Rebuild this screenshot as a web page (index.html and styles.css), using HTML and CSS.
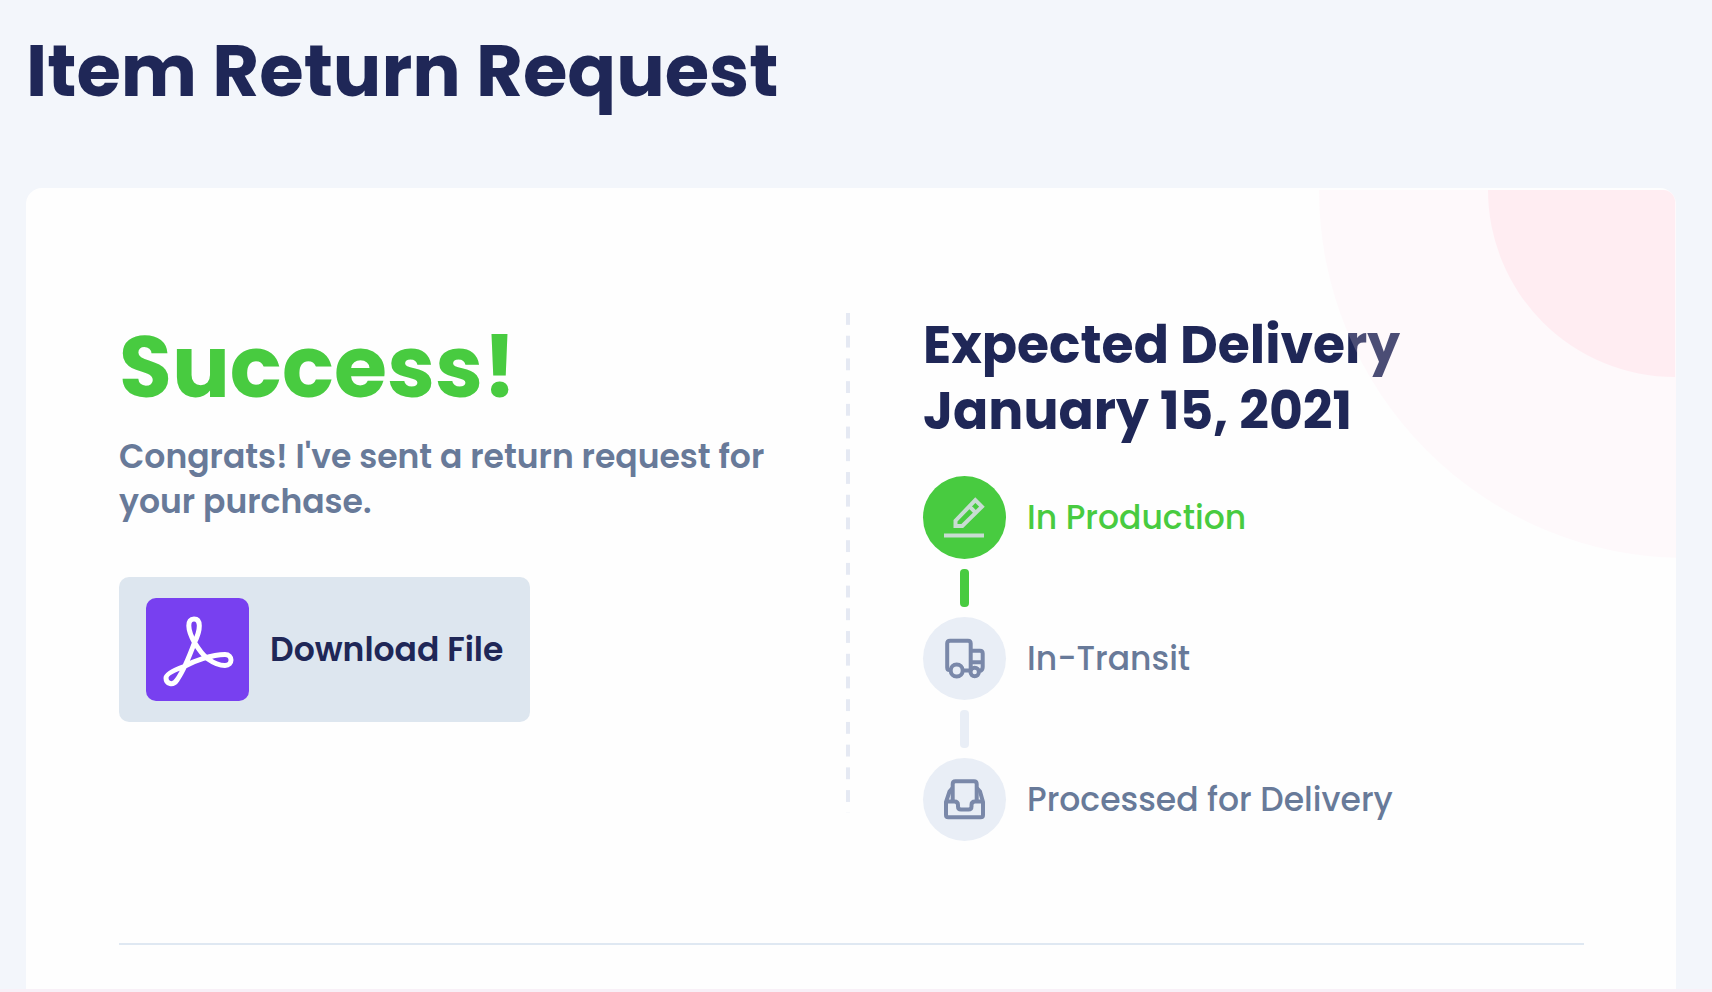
FILE: index.html
```html
<!DOCTYPE html>
<html lang="en">
<head>
<meta charset="utf-8">
<meta name="viewport" content="width=device-width, initial-scale=1">
<title>Item Return Request</title>
<link rel="stylesheet" href="styles.css">
</head>
<body>
<main class="page">
  <h1 class="page-title">Item Return Request</h1>
  <div class="card">
    <div class="columns">
      <section class="result">
        <h2 class="result-title">Success!</h2>
        <p class="result-text">Congrats! I've sent a return request for your purchase.</p>
        <button class="download" type="button">
          <svg class="download-icon" viewBox="0 0 103 103" aria-hidden="true">
            <path d="M48 21C41 21 41 31 48.5 44.5C53 52 58 58 62 61C69 66 74 67.5 79 67.5C87 67.5 87 56.500 79 56.500C66 56.500 48 63 38 68.500C28 72 20 76 20 80C20 86 27 88 31 82C38 72 45 54 48.500 44.500C55 31 55 21 48 21Z"/>
          </svg>
          <span>Download File</span>
        </button>
      </section>
      <div class="divider"></div>
      <section class="delivery">
        <h2 class="delivery-title">Expected Delivery<br>January 15, 2021</h2>
        <ol class="steps">
          <li class="step step-active">
            <svg class="step-icon" viewBox="0 0 83 83" aria-hidden="true">
              <path d="M32.500 50V44.700L52.300 24.200L58.900 30.700L39.300 50Z M46.500 30.500L52.600 36.600"/>
              <path d="M21 59.500H61"/>
            </svg>
            <span>In Production</span>
          </li>
          <li class="step">
            <svg class="step-icon" viewBox="0 0 83 83" aria-hidden="true">
              <path d="M27.500 53H26.500Q24.200 53 24.200 50.500V26.500Q24.200 23.800 27 23.800H45Q47.700 23.800 47.700 26.500V52 M47.700 33.800H57Q59.700 33.800 59.700 36.500V50Q59.700 53 57 54 M47.700 45.200H59.700 M40 53.500H47"/>
              <circle cx="33.700" cy="53.500" r="6"/>
              <circle cx="51.700" cy="55" r="4.200"/>
            </svg>
            <span>In-Transit</span>
          </li>
          <li class="step">
            <svg class="step-icon" viewBox="0 0 83 83" aria-hidden="true">
              <path d="M29.700 43V26Q29.700 23.300 32.500 23.300H51Q53.700 23.300 53.700 26V43"/>
              <path d="M29.500 30L26.500 33.500L23 44V57Q23 59.300 25.300 59.300H57.700Q60 59.300 60 57V44L57 33.500L53.900 30"/>
              <path d="M23 43.500H31.500Q35 43.500 35 47V48.500Q35 51.500 38 51.500H45.500Q48.500 51.500 48.500 48.500V47Q48.500 43.500 52 43.500H60"/>
            </svg>
            <span>Processed for Delivery</span>
          </li>
        </ol>
      </section>
    </div>
    <hr class="rule">
    <div class="arc arc-outer"></div>
    <div class="arc arc-inner"></div>
  </div>
</main>
</body>
</html>
```

FILE: styles.css
```css
* {
  box-sizing: border-box;
}

body {
  margin: 0;
  background: #f3f6fb;
  color: #1f2757;
  font-family: Poppins, Inter, "Open Sans", sans-serif;
}

h1, h2, p, ol {
  margin: 0;
  padding: 0;
}

.page {
  min-height: 100vh;
  padding: 35px 36px 0 26px;
  border-bottom: 4px solid #f8f0f7;
  display: flex;
  flex-direction: column;
}

.page-title {
  font-size: 72px;
  line-height: 72px;
  font-weight: 700;
}

.card {
  position: relative;
  overflow: hidden;
  flex: 1;
  margin-top: 81px;
  padding: 124px 92px 44px 93px;
  background: #fefefe;
  border-radius: 16px 16px 0 0;
}

.columns {
  display: grid;
  grid-template-columns: 727px 4px 1fr;
}

.result {
  padding-top: 5px;
}

.result-title {
  color: #48cb40;
  font-size: 86px;
  line-height: 100px;
  font-weight: 700;
}

.result-text {
  max-width: 660px;
  margin-top: 17px;
  color: #687a99;
  font-size: 33px;
  line-height: 45px;
  font-weight: 600;
}

.download {
  display: flex;
  align-items: center;
  gap: 21px;
  margin-top: 53px;
  padding: 21px 27px;
  border: 0;
  border-radius: 10px;
  background: #dde6ef;
  color: #1f2757;
  font: inherit;
  font-size: 33px;
  font-weight: 600;
  cursor: pointer;
}

.download-icon {
  width: 103px;
  height: 103px;
  border-radius: 10px;
  background: #7840f0;
  fill: none;
  stroke: #fff;
  stroke-width: 5;
  stroke-linejoin: round;
}

.divider {
  height: 500px;
  margin-top: 1px;
  background-image: linear-gradient(#e5e9f3 54%, transparent 54%);
  background-size: 4px 23px;
  background-repeat: round;
}

.delivery {
  padding-left: 73px;
}

.delivery-title {
  font-size: 52px;
  line-height: 66px;
  font-weight: 700;
}

.steps {
  display: grid;
  gap: 58px;
  margin-top: 32px;
  list-style: none;
}

.step {
  position: relative;
  display: flex;
  align-items: center;
  gap: 21px;
  color: #687a99;
  font-size: 33px;
  font-weight: 500;
}

.step-icon {
  width: 83px;
  height: 83px;
  border-radius: 50%;
  background: #e9eef6;
  fill: none;
  stroke: #7a88a9;
  stroke-width: 4;
}

.step:not(:last-child)::after {
  content: "";
  position: absolute;
  top: 93px;
  left: 37px;
  width: 9px;
  height: 38px;
  border-radius: 4px;
  background: #e9eef6;
}

.step-active {
  color: #48cb40;
}

.step-active .step-icon {
  background: #48cb40;
  stroke: #c8dcd3;
}

.step.step-active::after {
  background: #48cb40;
}

.rule {
  height: 2px;
  margin: 102px 0 0;
  border: 0;
  background: #dfe8f2;
}

.arc {
  position: absolute;
  border-radius: 0 0 0 100%;
  pointer-events: none;
}

.arc-inner {
  top: 2px;
  right: 1px;
  width: 187px;
  height: 187px;
  border-top-right-radius: 12px;
  background: #ffedf2;
}

.arc-outer {
  top: 2px;
  right: -10px;
  width: 367px;
  height: 368px;
  background: rgba(255, 230, 238, 0.2);
}
```
